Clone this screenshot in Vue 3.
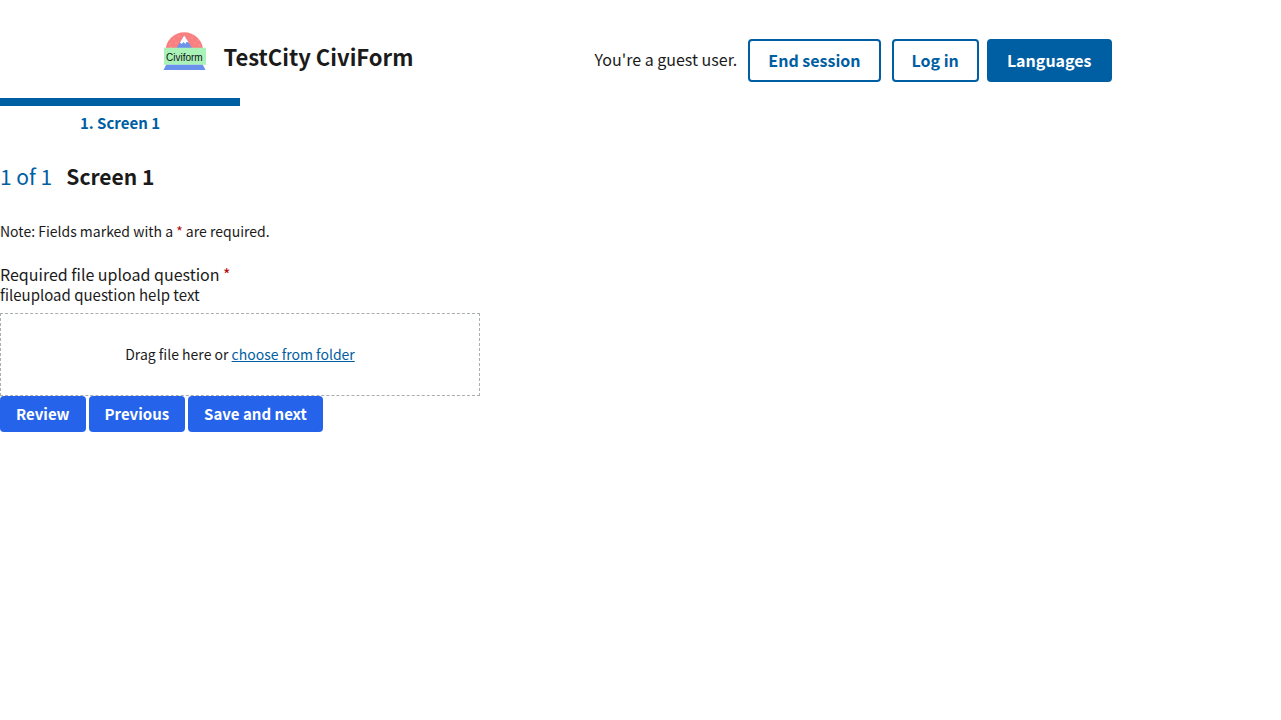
<script setup>
import { ref } from 'vue'

const fileName = ref('')
const steps = ['Screen 1']
const actions = ['Review', 'Previous', 'Save and next']

function onFile(event) {
  fileName.value = event.target.files[0]?.name ?? ''
}
</script>

<template>
  <div class="page">
    <header class="header">
      <a class="brand" href="#">
        <svg class="logo" viewBox="0 0 44 40" role="img" aria-label="Civiform logo">
          <path d="M2.5 20a18.8 18.8 0 0 1 37.6 0z" fill="#f98080" />
          <g fill="#fbb4b4">
            <circle cx="7" cy="13" r=".6" /><circle cx="11" cy="8" r=".6" />
            <circle cx="13" cy="12" r=".6" /><circle cx="16" cy="5" r=".6" />
            <circle cx="29" cy="7" r=".6" /><circle cx="32" cy="12" r=".6" />
            <circle cx="36" cy="14" r=".6" /><circle cx="31" cy="4" r=".5" />
            <circle cx="8" cy="16" r=".5" /><circle cx="35" cy="9" r=".6" />
          </g>
          <path d="M13 18L21.2 4.5 29.5 18z" fill="#6a91ec" />
          <path d="M17 11.5L21.2 4.5l4.6 7.2-2.1-1-1.4 2.2-1.7-2-2 2z" fill="#fff" />
          <path d="M1 16.8h42v17H1z" fill="#a9f2b8" />
          <path d="M3.2 33.8h36.6L42.5 39H.5z" fill="#6a91ec" />
          <text x="3" y="30" class="logo-text">Civiform</text>
        </svg>
        <span class="brand-name">TestCity CiviForm</span>
      </a>
      <nav class="nav" aria-label="Account">
        <span class="guest">You're a guest user.</span>
        <a class="btn outline" href="#">End session</a>
        <a class="btn outline" href="#">Log in</a>
        <button class="btn solid" type="button">Languages</button>
      </nav>
    </header>

    <main class="main">
      <ol class="steps">
        <li v-for="(step, i) in steps" :key="step" class="step" aria-current="step">
          {{ i + 1 }}. {{ step }}
        </li>
      </ol>
      <h1 class="heading"><span class="count">1 of 1</span><span>Screen 1</span></h1>
      <p class="note">Note: Fields marked with a <span class="req">*</span> are required.</p>

      <form @submit.prevent>
        <label class="question" for="upload">Required file upload question <span class="req">*</span></label>
        <p id="upload-help" class="help">fileupload question help text</p>
        <div class="drop">
          <span v-if="fileName">{{ fileName }}</span>
          <span v-else>Drag file here or <span class="choose">choose from folder</span></span>
          <input id="upload" class="file" type="file" aria-describedby="upload-help" @change="onFile" />
        </div>
        <div class="actions">
          <button v-for="action in actions" :key="action" class="action" type="submit">{{ action }}</button>
        </div>
      </form>
    </main>
  </div>
</template>

<style>
body {
  background: #fff;
}
</style>

<style scoped>
.page {
  color: #1b1b1b;
  font-family: "Noto Sans CJK SC", "Noto Sans", sans-serif;
  font-size: 15px;
  line-height: 24px;
}
.header {
  box-sizing: border-box;
  display: flex;
  align-items: flex-start;
  justify-content: space-between;
  max-width: 1024px;
  margin: 0 auto;
  padding: 31px 41px 16px 34px;
}
.brand {
  display: flex;
  align-items: flex-end;
  gap: 17px;
  color: inherit;
  text-decoration: none;
}
.logo {
  width: 44px;
  height: 40px;
}
.logo-text {
  font-family: "Liberation Sans", sans-serif;
  font-size: 10px;
  fill: #111;
}
.brand-name {
  font-size: 22px;
  font-weight: 700;
  line-height: 30px;
}
.nav {
  display: flex;
  align-items: flex-start;
  gap: 8px;
  margin-top: 8px;
  font-size: 16px;
}
.guest {
  margin-right: 3px;
  line-height: 40px;
}
.btn {
  box-sizing: border-box;
  border: 2px solid #005ea2;
  border-radius: 4px;
  padding: 8px 18px;
  font: inherit;
  font-weight: 700;
  line-height: 23px;
  text-decoration: none;
  cursor: pointer;
}
.outline {
  color: #005ea2;
  background: #fff;
}
.outline + .outline {
  margin-left: 3px;
}
.solid {
  color: #fff;
  background: #005ea2;
}
.steps {
  display: flex;
  margin: 0;
  padding: 0;
  list-style: none;
}
.step {
  width: 240px;
  border-top: 8px solid #005ea2;
  padding-top: 5px;
  color: #005ea2;
  font-weight: 700;
  text-align: center;
}
.heading {
  display: flex;
  align-items: center;
  gap: 14px;
  margin: 25px 0 27px;
  font-size: 21px;
  line-height: 32px;
}
.count {
  color: #005ea2;
  font-weight: 400;
}
.note {
  margin: 0 0 20px;
  font-size: 14px;
}
.req {
  color: #b50909;
}
.question {
  display: block;
  font-size: 16px;
  line-height: 22px;
}
.help {
  margin: 0 0 8px;
  line-height: 20px;
}
.drop {
  position: relative;
  box-sizing: border-box;
  max-width: 480px;
  border: 1px dashed #a9aeb1;
  padding: 31px 16px;
  font-size: 14px;
  line-height: 19px;
  text-align: center;
}
.choose {
  color: #005ea2;
  text-decoration: underline;
}
.file {
  position: absolute;
  inset: 0;
  width: 100%;
  height: 100%;
  opacity: 0;
  cursor: pointer;
}
.actions {
  display: flex;
  gap: 3px;
}
.action {
  border: 0;
  border-radius: 4px;
  padding: 8px 16px;
  color: #fff;
  background: #2563eb;
  font: inherit;
  font-weight: 700;
  line-height: 20px;
  cursor: pointer;
}
</style>
